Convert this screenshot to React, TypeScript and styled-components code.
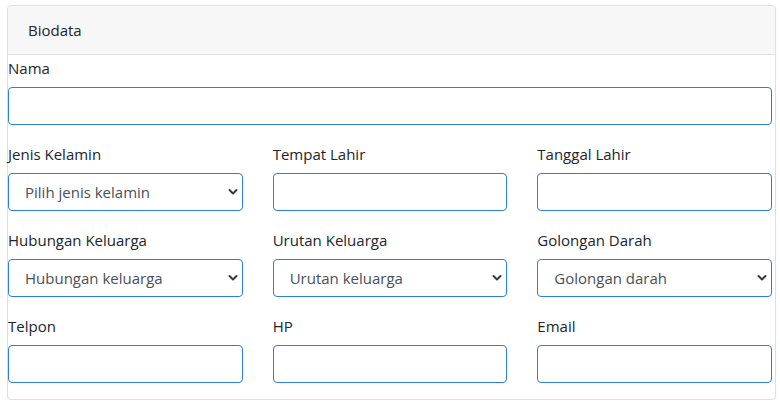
import React from "react";
import styled, { createGlobalStyle } from "styled-components";

const Global = createGlobalStyle`
  html, body { margin: 0; padding: 0; background: #fff; }
  body { font-family: "Open Sans", "Noto Sans", sans-serif; color: #212529; }
  * { box-sizing: border-box; }
`;

const Page = styled.div`
  padding: 5px 4px 0 7px;
  width: 780px;
`;

const Card = styled.section`
  width: 769px;
  border: 1px solid #dfdfdf;
  border-radius: 4px;
  background: #fff;
  box-shadow: 0 1px 2px rgba(0, 0, 0, 0.06);
`;

const CardHeader = styled.header`
  height: 49px;
  display: flex;
  align-items: center;
  padding: 0 20px;
  background: #f7f7f7;
  border-bottom: 1px solid #dfdfdf;
  border-radius: 4px 4px 0 0;
  font-size: 15px;
  color: #212529;
`;

const CardBody = styled.div`
  width: 764px;
  padding-top: 1px;
  padding-bottom: 16px;
`;

const Row = styled.div`
  display: grid;
  grid-template-columns: repeat(3, 1fr);
  column-gap: 30px;
`;

const Group = styled.div<{ $first?: boolean }>`
  display: flex;
  flex-direction: column;
  margin-top: ${(p) => (p.$first ? "0" : "17px")};
`;

const Label = styled.label`
  font-size: 15px;
  line-height: 24px;
  height: 24px;
  margin-bottom: 7px;
  color: #212529;
`;

const Input = styled.input`
  height: 38px;
  width: 100%;
  border: 1px solid #2d7fd2;
  border-radius: 4px;
  padding: 0 12px;
  font-family: inherit;
  font-size: 15px;
  color: #495057;
  background: #fff;
  outline: none;
`;

const SelectWrap = styled.div`
  position: relative;
  height: 38px;
`;

const Select = styled.select`
  appearance: none;
  -webkit-appearance: none;
  height: 38px;
  width: 100%;
  border: 1px solid #2d7fd2;
  border-radius: 4px;
  padding: 0 30px 0 16px;
  font-family: inherit;
  font-size: 15px;
  color: #495057;
  background: #fff;
  outline: none;
`;

const Chevron = styled.svg`
  position: absolute;
  right: 5px;
  top: 15px;
  width: 10px;
  height: 8px;
  pointer-events: none;
`;

const Field = ({ label, first }: { label: string; first?: boolean }) => (
  <Group $first={first}>
    <Label>{label}</Label>
    <Input type="text" />
  </Group>
);

const SelectField = ({ label, placeholder }: { label: string; placeholder: string }) => (
  <Group>
    <Label>{label}</Label>
    <SelectWrap>
      <Select defaultValue="">
        <option value="">{placeholder}</option>
      </Select>
      <Chevron viewBox="0 0 10 8">
        <path d="M1.5 2 L5 5.5 L8.5 2" fill="none" stroke="#343a40" strokeWidth="2" strokeLinecap="round" strokeLinejoin="round" />
      </Chevron>
    </SelectWrap>
  </Group>
);

export default function App() {
  return (
    <Page>
      <Global />
      <Card>
        <CardHeader>Biodata</CardHeader>
        <CardBody>
          <Field label="Nama" first />
          <Row>
            <SelectField label="Jenis Kelamin" placeholder="Pilih jenis kelamin" />
            <Field label="Tempat Lahir" />
            <Field label="Tanggal Lahir" />
          </Row>
          <Row>
            <SelectField label="Hubungan Keluarga" placeholder="Hubungan keluarga" />
            <SelectField label="Urutan Keluarga" placeholder="Urutan keluarga" />
            <SelectField label="Golongan Darah" placeholder="Golongan darah" />
          </Row>
          <Row>
            <Field label="Telpon" />
            <Field label="HP" />
            <Field label="Email" />
          </Row>
        </CardBody>
      </Card>
    </Page>
  );
}
